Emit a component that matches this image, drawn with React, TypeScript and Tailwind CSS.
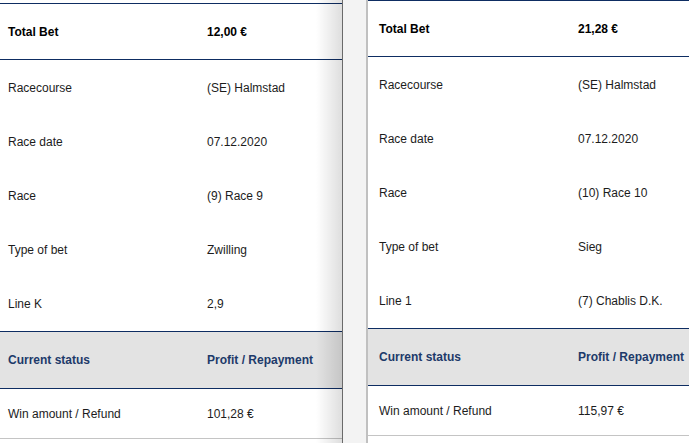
import React from "react";

type Data = {
  total: string;
  course: string;
  date: string;
  race: string;
  type: string;
  lineLabel: string;
  lineValue: string;
  win: string;
};

const left: Data = {
  total: "12,00 €",
  course: "(SE) Halmstad",
  date: "07.12.2020",
  race: "(9) Race 9",
  type: "Zwilling",
  lineLabel: "Line K",
  lineValue: "2,9",
  win: "101,28 €",
};

const right: Data = {
  total: "21,28 €",
  course: "(SE) Halmstad",
  date: "07.12.2020",
  race: "(10) Race 10",
  type: "Sieg",
  lineLabel: "Line 1",
  lineValue: "(7) Chablis D.K.",
  win: "115,97 €",
};

function Row({
  label,
  value,
  h,
  padLeft,
  className = "",
  labelClass = "",
}: {
  label: string;
  value: string;
  h: string;
  padLeft: string;
  className?: string;
  labelClass?: string;
}) {
  return (
    <div className={`flex items-center ${h} ${padLeft} ${className}`}>
      <div className={`w-[199px] shrink-0 whitespace-nowrap ${labelClass}`}>{label}</div>
      <div className={`whitespace-nowrap ${labelClass}`}>{value}</div>
    </div>
  );
}

function Panel({ d, padLeft }: { d: Data; padLeft: string }) {
  return (
    <div className="flex flex-col bg-white text-[#1c1c1c]">
      <Row
        label="Total Bet"
        value={d.total}
        h="h-[57px]"
        padLeft={padLeft}
        className="border-y border-[#0e2d62]"
        labelClass="font-bold text-black"
      />
      <Row label="Racecourse" value={d.course} h="h-[55px]" padLeft={padLeft} />
      <Row label="Race date" value={d.date} h="h-[54px]" padLeft={padLeft} />
      <Row label="Race" value={d.race} h="h-[54px]" padLeft={padLeft} />
      <Row label="Type of bet" value={d.type} h="h-[54px]" padLeft={padLeft} />
      <Row label={d.lineLabel} value={d.lineValue} h="h-[54px]" padLeft={padLeft} />
      <Row
        label="Current status"
        value="Profit / Repayment"
        h="h-[58px]"
        padLeft={padLeft}
        className="border-y border-[#0e2d62] bg-[#e3e3e3]"
        labelClass="font-bold text-[#1d3a6a]"
      />
      <Row
        label="Win amount / Refund"
        value={d.win}
        h="h-[50px]"
        padLeft={padLeft}
        className="border-b border-[#c4c4c4]"
      />
      <div className="h-[10px] bg-white" />
    </div>
  );
}

export default function App() {
  return (
    <div
      className="flex w-[689px] h-[443px] overflow-hidden bg-[#f3f3f3] text-[12px] leading-[14px]"
      style={{ fontFamily: '"Liberation Sans", Arial, sans-serif' }}
    >
      <div className="relative w-[343px] shrink-0 bg-white pt-[3px] border-r border-[#6a6a6a] overflow-hidden">
        <Panel d={left} padLeft="pl-[8px]" />
        <div className="pointer-events-none absolute right-0 top-0 bottom-0 w-[26px] bg-gradient-to-r from-[rgba(0,0,0,0)] to-[rgba(0,0,0,0.13)]" />
      </div>
      <div className="w-[23px] shrink-0 bg-[#f3f3f3]" />
      <div className="flex-1 min-w-0 border-l-2 border-[#c0c0c0] bg-white overflow-hidden">
        <Panel d={right} padLeft="pl-[11px]" />
      </div>
    </div>
  );
}
